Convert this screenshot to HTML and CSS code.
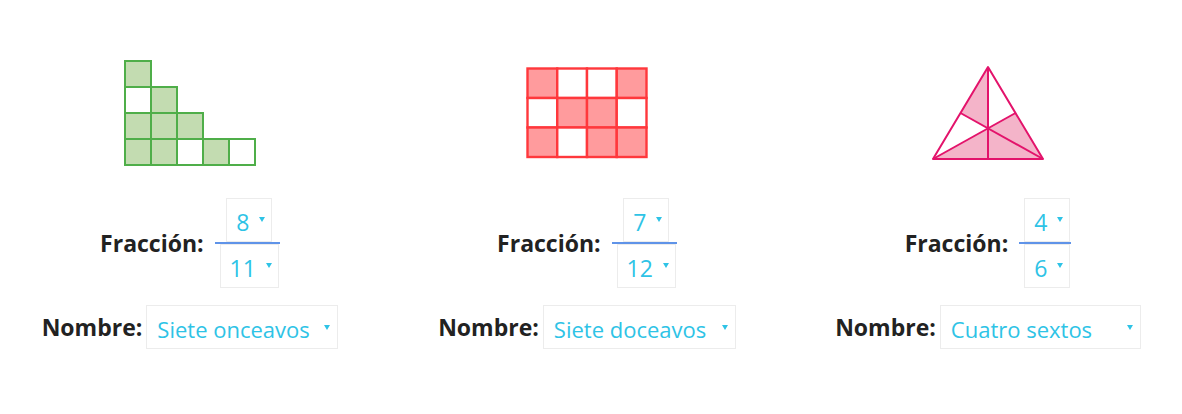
FILE: index.html
```html
<!DOCTYPE html>
<html lang="es">
<head>
<meta charset="utf-8">
<title>Fracciones</title>
<link rel="stylesheet" href="styles.css">
</head>
<body>
<main class="board">
  <section class="item">
    <div class="figure">
      <svg width="132" height="106" viewBox="0 0 132 106" class="grid-green">
        <g class="cells">
          <rect x="1" y="1" width="26" height="26" class="on"/>
          <rect x="1" y="27" width="26" height="26" class="off"/>
          <rect x="27" y="27" width="26" height="26" class="on"/>
          <rect x="1" y="53" width="26" height="26" class="on"/>
          <rect x="27" y="53" width="26" height="26" class="on"/>
          <rect x="53" y="53" width="26" height="26" class="on"/>
          <rect x="1" y="79" width="26" height="26" class="on"/>
          <rect x="27" y="79" width="26" height="26" class="on"/>
          <rect x="53" y="79" width="26" height="26" class="off"/>
          <rect x="79" y="79" width="26" height="26" class="on"/>
          <rect x="105" y="79" width="26" height="26" class="off"/>
        </g>
      </svg>
    </div>
    <div class="row frac-row">
      <span class="label">Fracción:</span>
      <div class="frac">
        <div class="sel num"><span>8</span><i class="caret"></i></div>
        <div class="bar"></div>
        <div class="sel den"><span>11</span><i class="caret"></i></div>
      </div>
    </div>
    <div class="row name-row">
      <span class="label">Nombre:</span>
      <div class="sel name w1"><span>Siete onceavos</span><i class="caret"></i></div>
    </div>
  </section>

  <section class="item">
    <div class="figure">
      <svg width="123" height="92" viewBox="0 0 123 92" class="grid-red">
        <g class="cells">
          <rect x="1.5" y="1.5" width="29.75" height="29.5" class="on"/>
          <rect x="31.25" y="1.5" width="29.75" height="29.5" class="off"/>
          <rect x="61" y="1.5" width="29.75" height="29.5" class="off"/>
          <rect x="90.75" y="1.5" width="29.75" height="29.5" class="on"/>
          <rect x="1.5" y="31" width="29.75" height="29.5" class="off"/>
          <rect x="31.25" y="31" width="29.75" height="29.5" class="on"/>
          <rect x="61" y="31" width="29.75" height="29.5" class="on"/>
          <rect x="90.75" y="31" width="29.75" height="29.5" class="off"/>
          <rect x="1.5" y="60.5" width="29.75" height="29.5" class="on"/>
          <rect x="31.25" y="60.5" width="29.75" height="29.5" class="off"/>
          <rect x="61" y="60.5" width="29.75" height="29.5" class="on"/>
          <rect x="90.75" y="60.5" width="29.75" height="29.5" class="on"/>
        </g>
      </svg>
    </div>
    <div class="row frac-row">
      <span class="label">Fracción:</span>
      <div class="frac">
        <div class="sel num"><span>7</span><i class="caret"></i></div>
        <div class="bar"></div>
        <div class="sel den"><span>12</span><i class="caret"></i></div>
      </div>
    </div>
    <div class="row name-row">
      <span class="label">Nombre:</span>
      <div class="sel name w2"><span>Siete doceavos</span><i class="caret"></i></div>
    </div>
  </section>

  <section class="item">
    <div class="figure">
      <svg width="114" height="96" viewBox="0 0 114 96" class="tri">
        <polygon points="57,2 29.5,48 57,63.33" class="on"/>
        <polygon points="2,94 57,94 57,63.33" class="on"/>
        <polygon points="57,94 112,94 57,63.33" class="on"/>
        <polygon points="112,94 84.5,48 57,63.33" class="on"/>
        <g class="lines">
          <polygon points="57,2 112,94 2,94" fill="none"/>
          <line x1="57" y1="2" x2="57" y2="94"/>
          <line x1="2" y1="94" x2="84.5" y2="48"/>
          <line x1="112" y1="94" x2="29.5" y2="48"/>
        </g>
      </svg>
    </div>
    <div class="row frac-row">
      <span class="label">Fracción:</span>
      <div class="frac">
        <div class="sel num"><span>4</span><i class="caret"></i></div>
        <div class="bar"></div>
        <div class="sel den"><span>6</span><i class="caret"></i></div>
      </div>
    </div>
    <div class="row name-row">
      <span class="label">Nombre:</span>
      <div class="sel name w3"><span>Cuatro sextos</span><i class="caret"></i></div>
    </div>
  </section>
</main>
</body>
</html>
```

FILE: styles.css
```css
* { box-sizing: border-box; }

html, body {
  margin: 0;
  padding: 0;
  background: #ffffff;
}

body {
  font-family: "Open Sans", "Noto Sans", "Liberation Sans", sans-serif;
  color: #222222;
}

.board {
  display: grid;
  grid-template-columns: 380px 414px 388px;
  padding-top: 48px;
  width: 1182px;
  height: 414px;
}

.item {
  display: flex;
  flex-direction: column;
  align-items: center;
}

.figure {
  height: 130px;
  display: flex;
  align-items: center;
  justify-content: center;
  margin-bottom: 20px;
}

.figure svg { display: block; }

.grid-green .cells rect {
  stroke: #4fae49;
  stroke-width: 2;
}
.grid-green .on { fill: #c3dcb1; }
.grid-green .off { fill: #ffffff; }

.grid-red .cells rect {
  stroke: #ff383c;
  stroke-width: 2.4;
}
.grid-red .on { fill: #ff9b9d; }
.grid-red .off { fill: #ffffff; }

.tri .on { fill: #f4b4c9; }
.tri .lines polygon,
.tri .lines line {
  stroke: #e3136b;
  stroke-width: 2;
  stroke-linejoin: round;
}

.row {
  display: flex;
  align-items: center;
  justify-content: center;
}

.label {
  font-weight: 700;
  font-size: 23px;
  color: #222222;
  white-space: nowrap;
}

.frac-row { gap: 11px; }
.name-row { gap: 4px; margin-top: 17px; }

.frac {
  display: flex;
  flex-direction: column;
  align-items: center;
}

.frac .sel {
  margin: 0 1px 0 5px;
  font-size: 23px;
  padding: 0 6px 0 9px;
  gap: 10px;
}

.bar {
  align-self: stretch;
  height: 2px;
  background: #5f93e8;
}

.sel {
  display: flex;
  align-items: center;
  height: 44px;
  border: 1px solid #ececec;
  background: #ffffff;
  color: #2ec3e6;
  font-size: 22px;
  padding: 0 7px 0 10px;
  gap: 11px;
  white-space: nowrap;
}

.sel span { line-height: 1; padding-top: 4px; }

.caret {
  display: block;
  width: 0;
  height: 0;
  border-left: 3px solid transparent;
  border-right: 3px solid transparent;
  border-top: 5px solid #2ec3e6;
  margin-top: -1px;
}

.name .caret { margin-left: auto; margin-top: 1px; }

.w1 { width: 192px; }
.w2 { width: 193px; }
.w3 { width: 201px; }
```
